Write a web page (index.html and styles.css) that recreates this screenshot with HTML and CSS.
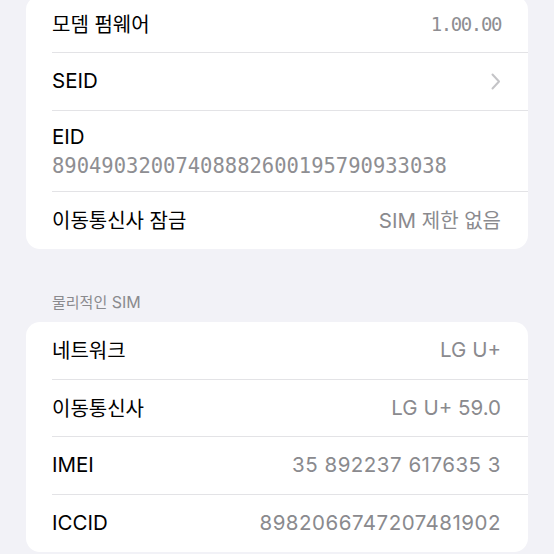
FILE: index.html
```html
<!DOCTYPE html>
<html lang="ko">
<head>
<meta charset="utf-8">
<link rel="stylesheet" href="styles.css">
</head>
<body>
<main class="page">
  <section class="card card-top">
    <div class="row"><div class="row-inner">
      <span class="label ko">모뎀 펌웨어</span>
      <span class="value mono-short">1.00.00</span>
    </div></div>
    <div class="row"><div class="row-inner">
      <span class="label">SEID</span>
      <svg class="chev" width="10" height="17" viewBox="0 0 10 17"><path d="M1.5 1.5 L8 8.5 L1.5 15.5" fill="none" stroke="#c4c4c7" stroke-width="2" stroke-linecap="round" stroke-linejoin="round"/></svg>
    </div></div>
    <div class="row"><div class="row-inner stacked">
      <span class="label">EID</span>
      <span class="value mono">89049032007408882600195790933038</span>
    </div></div>
    <div class="row"><div class="row-inner">
      <span class="label ko">이동통신사 잠금</span>
      <span class="value">SIM <span class="ko">제한 없음</span></span>
    </div></div>
  </section>

  <h2 class="section-header"><span class="ko">물리적인</span> SIM</h2>

  <section class="card">
    <div class="row"><div class="row-inner">
      <span class="label ko">네트워크</span>
      <span class="value">LG U+</span>
    </div></div>
    <div class="row"><div class="row-inner">
      <span class="label ko">이동통신사</span>
      <span class="value">LG U+ 59.0</span>
    </div></div>
    <div class="row"><div class="row-inner">
      <span class="label">IMEI</span>
      <span class="value num">35 892237 617635 3</span>
    </div></div>
    <div class="row"><div class="row-inner">
      <span class="label">ICCID</span>
      <span class="value num">8982066747207481902</span>
    </div></div>
  </section>
</main>
</body>
</html>
```

FILE: styles.css
```css
html, body {
  margin: 0;
  padding: 0;
  background: #f2f2f7;
}

body {
  font-family: Inter, "Noto Sans CJK KR", sans-serif;
  font-size: 20.5px;
  color: #000;
  overflow: hidden;
}

.page {
  display: flex;
  flex-direction: column;
  margin-top: -4.5px;
}

.ko {
  font-family: "Noto Sans CJK KR", sans-serif;
  font-size: 20px;
}

.card {
  background: #fff;
  margin: 0 26px;
  border-radius: 14px;
  overflow: hidden;
}

.row {
  padding-left: 26px;
}

.row-inner {
  height: 57.5px;
  border-bottom: 1px solid #e3e3e6;
  display: flex;
  align-items: center;
  justify-content: space-between;
  padding-right: 27px;
  box-sizing: border-box;
}

.row:last-child .row-inner {
  border-bottom: none;
}

.row-inner.stacked {
  height: 81px;
  flex-direction: column;
  align-items: flex-start;
  justify-content: flex-start;
  padding-top: 13px;
}

.stacked .label {
  line-height: 26px;
}

.stacked .value {
  line-height: 28px;
  margin-top: 2px;
}

.label {
  line-height: 26px;
}

.value {
  color: #8a8a8e;
  line-height: 26px;
  white-space: nowrap;
}

.num {
  letter-spacing: 0.5px;
}

.mono {
  font-family: "DejaVu Sans Mono", monospace;
  font-size: 20.5px;
  color: #8e8e92;
}

.mono-short {
  font-family: "DejaVu Sans Mono", monospace;
  font-size: 19px;
  letter-spacing: -1.4px;
  color: #8e8e92;
}

.chev {
  display: block;
}

.section-header {
  margin: 43px 0 10px 52px;
  font-weight: normal;
  font-size: 16px;
  line-height: 20px;
  color: #8a8a8e;
}

.section-header .ko {
  font-size: 15px;
}
```
